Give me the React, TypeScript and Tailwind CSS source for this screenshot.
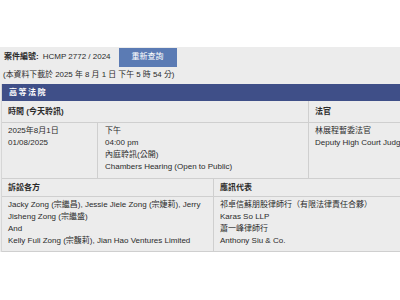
import React from 'react';

const font = "font-['Liberation_Sans','Noto_Sans_CJK_TC',sans-serif]";

const CaseHeader: React.FC = () => (
  <div className="bg-[#ececec] w-[440px] pl-[4px]">
    <div className="flex items-center h-[20px] text-[8px] text-[#2b2b2b]">
      <span className="font-bold">案件編號:</span>
      <span className="ml-[4px]">HCMP 2772 / 2024</span>
      <button className="ml-[8px] w-[58px] h-[19px] bg-[#5b7bb4] text-white text-[8px] leading-none">重新查詢</button>
    </div>
    <div className="h-[17px] pt-[2px] text-[7.9px] leading-[12px] text-[#2b2b2b] -ml-[1px]">
      (本資料下載於 2025 年 8 月 1 日 下午 5 時 54 分)
    </div>
  </div>
);

const App: React.FC = () => {
  return (
    <div className={`w-[400px] h-[300px] overflow-hidden bg-white ${font}`}>
      <div className="h-[47px]"></div>
      <CaseHeader />
      <div className="bg-[#ececec] w-[440px] pl-[1px]">
        <div className="border-l border-[#d6d6d6] text-[8px] leading-[12px] text-[#2b2b2b]">
          <div className="h-[17px] bg-[#3f4f88] text-white font-bold flex items-center pl-[7px] tracking-[1.5px]">高等法院</div>

          <div className="grid grid-cols-[306px_1fr] border-b border-[#cfcfcf]">
            <div className="h-[21px] flex items-center pl-[6px] font-bold">時間 (今天聆訊)</div>
            <div className="h-[21px] flex items-center pl-[6px] font-bold border-l border-[#cfcfcf]">法官</div>
          </div>

          <div className="grid grid-cols-[95px_211px_1fr] border-b border-[#cfcfcf]">
            <div className="pl-[6px] pt-[2px] pb-[5px]">
              <div>2025年8月1日</div>
              <div>01/08/2025</div>
            </div>
            <div className="pl-[7px] pt-[2px] pb-[5px] border-l border-[#cfcfcf] whitespace-nowrap">
              <div>下午</div>
              <div>04:00 pm</div>
              <div>內庭聆訊(公開)</div>
              <div>Chambers Hearing (Open to Public)</div>
            </div>
            <div className="pl-[6px] pt-[2px] pb-[5px] border-l border-[#cfcfcf] whitespace-nowrap">
              <div>林展程暫委法官</div>
              <div>Deputy High Court Judge</div>
            </div>
          </div>

          <div className="grid grid-cols-[211px_1fr] border-b border-[#cfcfcf]">
            <div className="h-[18px] flex items-center pl-[6px] font-bold border-b border-[#cfcfcf]">訴訟各方</div>
            <div className="h-[18px] flex items-center pl-[6px] font-bold border-l border-b border-[#cfcfcf]">應訊代表</div>
            <div className="pl-[6px] pt-[2px] pb-[4px] whitespace-nowrap">
              <div>Jacky Zong (宗繼昌), Jessie Jiele Zong (宗婕莉), Jerry</div>
              <div>Jisheng Zong (宗繼盛)</div>
              <div>And</div>
              <div>Kelly Fuli Zong (宗馥莉), Jian Hao Ventures Limited</div>
            </div>
            <div className="pl-[6px] pt-[2px] pb-[4px] border-l border-[#cfcfcf] whitespace-nowrap">
              <div>祁卓信蘇朋股律師行（有限法律責任合夥）</div>
              <div>Karas So LLP</div>
              <div>蕭一峰律師行</div>
              <div>Anthony Siu &amp; Co.</div>
            </div>
          </div>
        </div>
      </div>
    </div>
  );
};

export default App;
